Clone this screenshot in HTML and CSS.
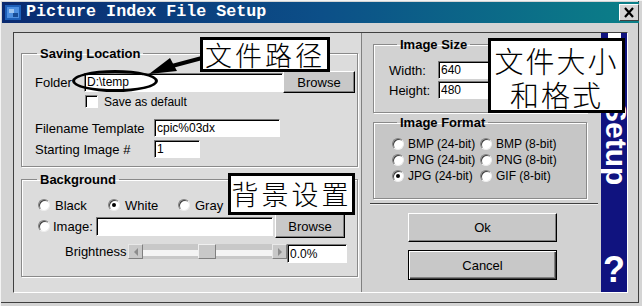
FILE: index.html
```html
<!DOCTYPE html>
<html lang="zh-CN">
<head>
    <meta charset="UTF-8">
    <title>Picture Index File Setup</title>
    <link rel="stylesheet" href="styles.css">
</head>
<body>
<div class="window">
    <div class="titlebar">
        <svg class="app-icon" width="16" height="15" viewBox="0 0 16 15">
            <rect x="0" y="0" width="16" height="15" fill="#1d5fb8"/>
            <rect x="2" y="2" width="12" height="11" fill="#4d8fe0"/>
            <rect x="4" y="4" width="5" height="4" fill="#9cc4f0"/>
            <rect x="8" y="8" width="5" height="4" fill="#174c96"/>
        </svg>
        <span class="title">Picture Index File Setup</span>
        <span class="close">
            <svg width="12" height="11" viewBox="0 0 12 11">
                <path d="M2 1 L10 10 M10 1 L2 10" stroke="#000" stroke-width="2.2"/>
            </svg>
        </span>
    </div>

    <div class="client">
        <div class="panel">
            <!-- 左欄：保存位置 + 背景 -->
            <div class="col-left">
                <fieldset class="group saving">
                    <legend>Saving Location</legend>
                    <div class="row folder-row">
                        <label class="lbl lbl-folder">Folder</label>
                        <input class="field folder" type="text" value="D:\temp">
                        <button class="btn browse">Browse</button>
                    </div>
                    <div class="row check-row">
                        <span class="checkbox"></span>
                        <span>Save as default</span>
                    </div>
                    <div class="row tpl-row">
                        <label class="lbl lbl-wide">Filename Template</label>
                        <input class="field tpl" type="text" value="cpic%03dx">
                    </div>
                    <div class="row start-row">
                        <label class="lbl lbl-wide">Starting Image #</label>
                        <input class="field start" type="text" value="1">
                    </div>
                </fieldset>

                <fieldset class="group background">
                    <legend>Background</legend>
                    <div class="row radio-row">
                        <span class="opt"><span class="radio"></span>Black</span>
                        <span class="opt"><span class="radio on"></span>White</span>
                        <span class="opt"><span class="radio"></span>Gray</span>
                    </div>
                    <div class="row image-row">
                        <span class="radio"></span>
                        <label class="lbl lbl-image">Image:</label>
                        <input class="field image" type="text" value="">
                        <button class="btn browse2">Browse</button>
                    </div>
                    <div class="row bright-row">
                        <label class="lbl lbl-bright">Brightness</label>
                        <div class="scrollbar">
                            <span class="sb-btn"><span class="tri tri-left"></span></span>
                            <span class="sb-track">
                                <span class="sb-thumb"></span>
                            </span>
                            <span class="sb-btn"><span class="tri tri-right"></span></span>
                        </div>
                        <input class="field bright" type="text" value="0.0%">
                    </div>
                </fieldset>
            </div>

            <!-- 右欄：尺寸 + 格式 + 按鈕 -->
            <div class="col-right">
                <fieldset class="group size">
                    <legend>Image Size</legend>
                    <div class="row size-row">
                        <label class="lbl lbl-size">Width:</label>
                        <input class="field num" type="text" value="640">
                    </div>
                    <div class="row size-row second">
                        <label class="lbl lbl-size">Height:</label>
                        <input class="field num" type="text" value="480">
                    </div>
                </fieldset>

                <fieldset class="group format">
                    <legend>Image Format</legend>
                    <div class="row fmt-row">
                        <span class="opt fmt"><span class="radio"></span>BMP (24-bit)</span>
                        <span class="opt"><span class="radio"></span>BMP (8-bit)</span>
                    </div>
                    <div class="row fmt-row">
                        <span class="opt fmt"><span class="radio"></span>PNG (24-bit)</span>
                        <span class="opt"><span class="radio"></span>PNG (8-bit)</span>
                    </div>
                    <div class="row fmt-row">
                        <span class="opt fmt"><span class="radio on"></span>JPG (24-bit)</span>
                        <span class="opt"><span class="radio"></span>GIF (8-bit)</span>
                    </div>
                </fieldset>

                <div class="sep"></div>
                <button class="btn big ok">Ok</button>
                <button class="btn big cancel">Cancel</button>
            </div>

            <div class="strip">
                <span class="strip-mark"></span>
                <span class="strip-text">Setup</span>
                <span class="help">?</span>
            </div>
        </div>
    </div>

    <!-- 標註 -->
    <div class="note note-path">文件路径</div>
    <div class="note note-size">文件大小<br>和格式</div>
    <div class="note note-bg">背景设置</div>
    <div class="ring"></div>
    <svg class="arrow" width="70" height="30" viewBox="140 50 70 30">
        <path d="M172 66 L202 58" stroke="#000" stroke-width="4"/>
        <path d="M149 74 L170 58 L177 71 Z" fill="#000"/>
    </svg>
</div>
</body>
</html>
```

FILE: styles.css
```css
/* 基本樣式 */
body {
    margin: 0;
    background: #d4d4d4;
    font-family: "Liberation Sans", Arial, sans-serif;
    font-size: 13px;
    color: #000;
}

.window {
    position: relative;
    width: 642px;
    height: 306px;
    box-sizing: border-box;
    background: #d4d4d4;
    overflow: hidden;
    box-shadow: inset 1px 1px #f4f4f4, inset -3px -3px #d4d4d4, inset -4px -4px #404040;
}

/* 標題列 */
.titlebar {
    display: flex;
    align-items: center;
    height: 21px;
    margin: 2px 3px 0 2px;
    padding-left: 3px;
    background: linear-gradient(90deg, #0a2a70, #0c4f88 50%, #0b8088);
}

.app-icon {
    flex: none;
}

.title {
    margin-left: 5px;
    font-family: "Liberation Mono", "Courier New", monospace;
    font-weight: bold;
    font-size: 16.7px;
    color: #fff;
    line-height: 1;
}

.close {
    display: flex;
    align-items: center;
    justify-content: center;
    width: 18px;
    height: 15px;
    margin-left: auto;
    margin-right: 0;
    background: #d4d4d4;
    border: 1px solid;
    border-color: #fff #404040 #404040 #fff;
}

.client {
    padding: 9px 0 0 13px;
}

.panel {
    display: flex;
    width: 615px;
    height: 261px;
    box-sizing: border-box;
    border: 1px solid;
    border-color: #404040 #fff #fff #404040;
}

.col-left {
    width: 348px;
    box-sizing: border-box;
    padding: 13px 3px 0 7px;
    background: #dcdcdc;
    border-right: 1px solid #808080;
}

.col-right {
    width: 239px;
    box-sizing: border-box;
    padding: 4px 14px 0 11px;
    background: #d2d2d2;
}

/* 群組框 */
.group {
    margin: 0;
    padding: 0;
    border: 1px solid #8a8a8a;
    box-shadow: inset 1px 1px #fff, 1px 1px #fff;
}

.group legend {
    padding: 0 3px;
    font-weight: bold;
    font-size: 13px;
    line-height: 15px;
}

.row {
    display: flex;
    align-items: center;
}

.lbl {
    flex: none;
    white-space: nowrap;
}

.field {
    box-sizing: border-box;
    height: 18px;
    margin: 0;
    padding: 0 2px;
    border: 1px solid;
    border-color: #7a7a7a #fff #fff #7a7a7a;
    box-shadow: inset 1px 1px #000;
    background: #fff;
    font-family: "Liberation Sans", Arial, sans-serif;
    font-size: 12px;
    color: #000;
    outline: none;
}

.btn {
    box-sizing: border-box;
    margin: 0;
    padding: 0;
    background: #c8c8c8;
    border: 1px solid;
    border-color: #fff #000 #000 #fff;
    box-shadow: inset -1px -1px #808080;
    font-family: "Liberation Sans", Arial, sans-serif;
    font-size: 13px;
    color: #000;
}

/* 保存位置 */
.saving {
    padding: 10px 2px 8px 13px;
}

.saving legend {
    margin-left: 2px;
}

.folder-row {
    height: 22px;
}

.lbl-folder {
    width: 49px;
}

.folder {
    width: 199px;
    height: 19px;
}

.browse {
    width: 72px;
    height: 22px;
}

.check-row {
    margin: 2px 0 0 50px;
    height: 13px;
    gap: 6px;
    font-size: 12px;
}

.checkbox {
    width: 13px;
    height: 13px;
    box-sizing: border-box;
    background: #fff;
    border: 1px solid;
    border-color: #808080 #fff #fff #808080;
    box-shadow: inset 1px 1px #000;
}

.tpl-row {
    margin-top: 11px;
}

.lbl-wide {
    width: 119px;
}

.tpl {
    width: 126px;
}

.start-row {
    margin-top: 3px;
}

.start {
    width: 46px;
}

/* 背景 */
.background {
    margin-top: 5px;
    padding: 10px 2px 13px 16px;
}

.background legend {
    margin-left: -1px;
}

.radio-row {
    height: 16px;
}

.opt {
    display: flex;
    align-items: center;
    gap: 5px;
    width: 70px;
    white-space: nowrap;
}

.radio {
    position: relative;
    flex: none;
    width: 12px;
    height: 12px;
    box-sizing: border-box;
    border-radius: 50%;
    background: #fff;
    border: 1px solid;
    border-color: #808080 #eee #eee #808080;
    box-shadow: inset 1px 1px #404040;
}

.radio.on::after {
    content: "";
    position: absolute;
    left: 3px;
    top: 3px;
    width: 4px;
    height: 4px;
    border-radius: 50%;
    background: #000;
}

.image-row {
    margin-top: 1px;
    height: 24px;
}

.lbl-image {
    width: 43px;
    margin-left: 3px;
}

.image {
    width: 177px;
    height: 19px;
}

.browse2 {
    width: 70px;
    height: 24px;
    margin-left: 2px;
}

.bright-row {
    align-items: flex-start;
    margin: 6px 0 0 27px;
}

.lbl-bright {
    width: 63px;
    line-height: 16px;
}

.scrollbar {
    display: flex;
    width: 159px;
    height: 15px;
}

.sb-btn {
    display: flex;
    align-items: center;
    justify-content: center;
    width: 15px;
    height: 15px;
    box-sizing: border-box;
    background: #c8c8c8;
    border: 1px solid;
    border-color: #e8e8e8 #808080 #808080 #e8e8e8;
}

.tri {
    width: 0;
    height: 0;
    border-top: 4px solid transparent;
    border-bottom: 4px solid transparent;
}

.tri-left {
    border-right: 4px solid #8c8c8c;
}

.tri-right {
    border-left: 4px solid #8c8c8c;
}

.sb-track {
    position: relative;
    flex: 1;
    background: linear-gradient(#c8c8c8 0 6px, #f4f4f4 6px 12px, #c8c8c8 12px);
}

.sb-thumb {
    position: absolute;
    left: 55px;
    top: 0;
    width: 18px;
    height: 15px;
    box-sizing: border-box;
    background: #c8c8c8;
    border: 1px solid;
    border-color: #f0f0f0 #808080 #808080 #f0f0f0;
}

.bright {
    width: 60px;
    height: 19px;
}

/* 尺寸 */
.size {
    padding: 9px 0 13px 15px;
}

.size legend {
    margin-left: 8px;
}

.lbl-size {
    width: 49px;
}

.num {
    width: 52px;
}

.size-row.second {
    margin-top: 2px;
}

/* 格式 */
.format {
    margin-top: 2px;
    padding: 6px 0 14px 18px;
    background: #c6c6c6;
}

.format legend {
    margin-left: 5px;
}

.fmt-row {
    height: 16px;
    font-size: 12px;
}

.fmt-row .opt {
    gap: 4px;
    width: auto;
}

.fmt-row .opt.fmt {
    width: 88px;
}

.sep {
    height: 0;
    margin: 4px -11px 0 -3px;
    border-top: 1px solid #404040;
    border-bottom: 1px solid #f0f0f0;
}

.big {
    display: block;
    width: 149px;
    height: 29px;
    margin: 8px 0 0 35px;
}

.cancel {
    height: 30px;
    border: 1px solid #000;
    box-shadow: inset 1px 1px #fff, inset -1px -1px #404040, inset -2px -2px #808080;
}

/* 藍色側欄 */
.strip {
    display: flex;
    flex-direction: column;
    align-items: flex-start;
    width: 26px;
    background: #10137f;
    overflow: hidden;
    color: #fff;
    font-weight: bold;
}

.strip-mark {
    width: 13px;
    height: 5px;
    margin-left: 7px;
    background: #fff;
}

.strip-text {
    margin-top: 64px;
    writing-mode: vertical-rl;
    font-size: 30px;
    line-height: 30px;
}

.help {
    align-self: center;
    margin-top: auto;
    margin-bottom: 4px;
    font-size: 36px;
    line-height: 36px;
}

/* 標註 */
.note {
    position: absolute;
    box-sizing: border-box;
    background: #fff;
    border: 3px solid #000;
    font-family: "Noto Sans CJK SC", sans-serif;
    font-weight: 300;
    color: #000;
    text-align: center;
}

.note-path {
    left: 200px;
    top: 37px;
    width: 130px;
    height: 35px;
    font-size: 27px;
    line-height: 29px;
    letter-spacing: 3px;
}

.note-size {
    left: 488px;
    top: 38px;
    width: 137px;
    height: 75px;
    padding-top: 2px;
    font-size: 29px;
    line-height: 34px;
    letter-spacing: 2px;
}

.note-bg {
    left: 228px;
    top: 173px;
    width: 127px;
    height: 42px;
    font-size: 27px;
    line-height: 36px;
    letter-spacing: 3px;
}

.ring {
    position: absolute;
    left: 72px;
    top: 70px;
    width: 86px;
    height: 22px;
    box-sizing: border-box;
    border: 3px solid #000;
    border-radius: 50%;
}

.arrow {
    position: absolute;
    left: 140px;
    top: 50px;
}
```
